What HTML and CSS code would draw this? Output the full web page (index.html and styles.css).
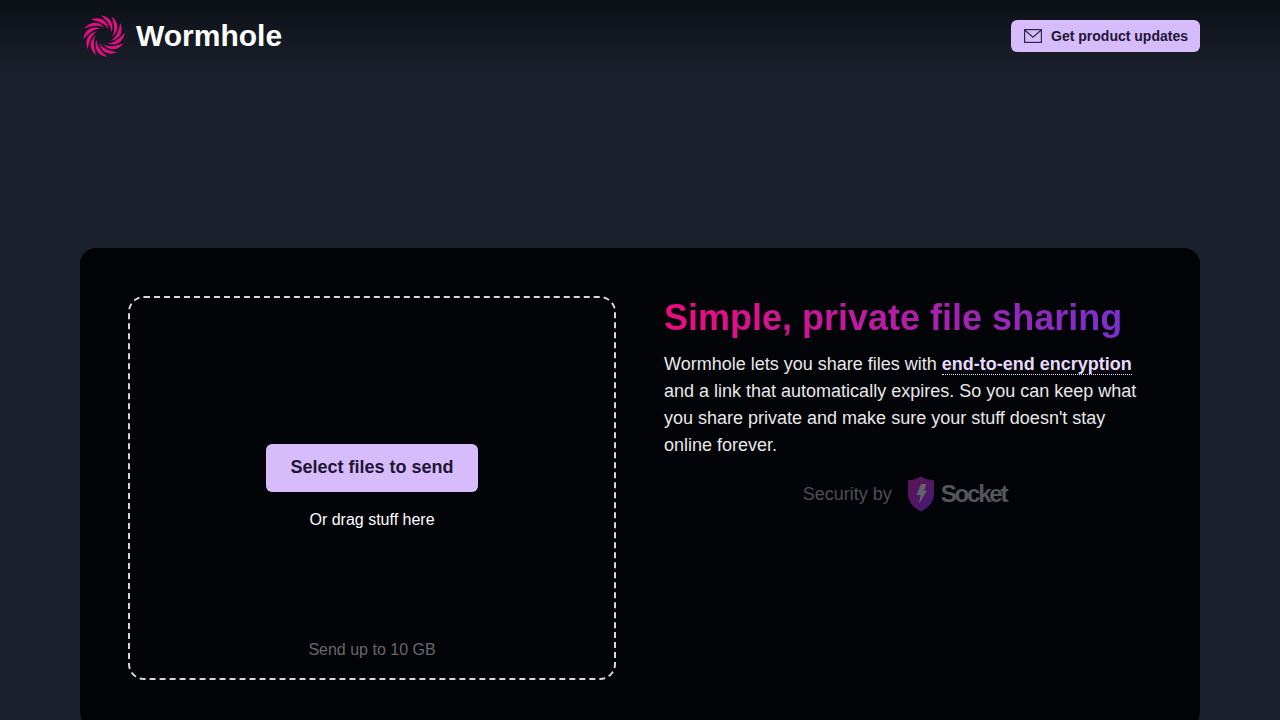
FILE: index.html
```html
<!doctype html>
<html lang="en">
<head>
	<meta charset="utf-8">
	<title>Wormhole</title>
	<link rel="stylesheet" href="styles.css">
</head>
<body>
	<!--Header-->
	<header class="header">
		<div class="brand">
			<svg class="logo" viewBox="0 0 40 40" width="42" height="42">
				<defs>
					<path id="blade" d="M17 .4C25 1 30.500 8 27 17 27.300 10.500 22.500 5 17 .4Z"/>
				</defs>
				<g fill="#e0107f">
					<use href="#blade"/>
					<use href="#blade" transform="rotate(30 20 20)"/>
					<use href="#blade" transform="rotate(60 20 20)"/>
					<use href="#blade" transform="rotate(90 20 20)"/>
					<use href="#blade" transform="rotate(120 20 20)"/>
					<use href="#blade" transform="rotate(150 20 20)"/>
					<use href="#blade" transform="rotate(180 20 20)"/>
					<use href="#blade" transform="rotate(210 20 20)"/>
					<use href="#blade" transform="rotate(240 20 20)"/>
					<use href="#blade" transform="rotate(270 20 20)"/>
					<use href="#blade" transform="rotate(300 20 20)"/>
					<use href="#blade" transform="rotate(330 20 20)"/>
				</g>
			</svg>
			<div class="brandName">Wormhole</div>
		</div>
		<a class="updates" href="#">
			<svg class="mail" viewBox="0 0 18 14" width="18" height="14">
				<rect x=".6" y=".6" width="16.800" height="12.800" fill="none" stroke="#2e2848" stroke-width="1.200"/>
				<path d="M1 1.200l8 7 8-7" fill="none" stroke="#2e2848" stroke-width="1.200"/>
			</svg>
			Get product updates
		</a>
	</header>

	<!--Main card-->
	<main class="card">
		<div class="drop">
			<div></div>
			<div class="dropCenter">
				<button class="select" type="button">Select files to send</button>
				<div class="dragNote">Or drag stuff here</div>
			</div>
			<div class="limit">Send up to 10 GB</div>
		</div>
		<div class="intro">
			<h1 class="headline">Simple, private file sharing</h1>
			<p class="text">Wormhole lets you share files with <a class="strong" href="#">end-to-end encryption</a> and a link that automatically expires. So you can keep what you share private and make sure your stuff doesn't stay online forever.</p>
			<div class="security">
				<span>Security by</span>
				<span class="socket">
					<svg viewBox="0 0 28 36" width="28" height="36">
						<defs>
							<linearGradient id="shield" x1="0" y1="0" x2="1" y2="1">
								<stop offset="0" stop-color="#5e1650"/>
								<stop offset="1" stop-color="#45197a"/>
							</linearGradient>
						</defs>
						<path d="M14 .5C18 3 22 4 27 4.200V18C27 26 21 32 14 35.500 7 32 1 26 1 18V4.200C6 4 10 3 14 .5Z" fill="url(#shield)"/>
						<path d="M14 8H19.500L17 14.500H20L12 28 13.500 19H9.500Z" fill="#62626a"/>
					</svg>
					<span class="socketName">Socket</span>
				</span>
			</div>
		</div>
	</main>
</body>
</html>
```

FILE: styles.css
```css
html, body {
	height: 720px;
	overflow: hidden;
}

body {
	margin: 0;
	background-color: #1a202c;
	font-family: "Liberation Sans", Arial, sans-serif;
	color: #fff;
}

/*header*/
.header {
	height: 72px;
	box-sizing: border-box;
	padding: 0 80px;
	display: flex;
	align-items: center;
	justify-content: space-between;
	background: linear-gradient(#0d1017, #1a202c);
}

.brand {
	display: flex;
	align-items: center;
	gap: 11px;
	padding-left: 3px;
}

.logo {
	display: block;
}

.brandName {
	font-size: 30px;
	font-weight: bold;
	line-height: 36px;
}

.updates {
	display: flex;
	align-items: center;
	gap: 9px;
	height: 32px;
	padding: 0 12px 0 13px;
	border-radius: 6px;
	background-color: #d6bcfa;
	color: #1f1636;
	font-size: 14px;
	font-weight: bold;
	text-decoration: none;
}

/*card*/
.card {
	margin: 176px 80px 0;
	height: 480px;
	box-sizing: border-box;
	padding: 48px;
	display: flex;
	gap: 48px;
	border-radius: 16px;
	background-color: #030407;
}

.drop {
	width: 488px;
	height: 384px;
	flex: none;
	box-sizing: border-box;
	display: grid;
	grid-template-rows: 1fr auto 1fr;
	justify-items: center;
	border: 2px dashed #d8d8d8;
	border-radius: 16px;
}

.dropCenter {
	display: flex;
	flex-direction: column;
	align-items: center;
}

.select {
	height: 48px;
	padding: 0 24px 2px;
	border: 0;
	border-radius: 6px;
	background-color: #d6bcfa;
	color: #1f1636;
	font-family: inherit;
	font-size: 18px;
	font-weight: bold;
}

.dragNote {
	margin-top: 16px;
	font-size: 16px;
	line-height: 24px;
}

.limit {
	align-self: end;
	margin-bottom: 18px;
	font-size: 16px;
	line-height: 20px;
	color: #68686e;
}

/*right column*/
.intro {
	flex: 1;
}

.headline {
	margin: 0;
	font-size: 36px;
	line-height: 44px;
	font-weight: bold;
	background: linear-gradient(90deg, #ed0c7e, #7a30cc);
	background-clip: text;
	-webkit-background-clip: text;
	color: transparent;
	width: fit-content;
}

.text {
	margin: 11px 0 0;
	font-size: 18px;
	line-height: 27px;
	color: #e8e8ea;
}

.strong {
	font-weight: bold;
	color: #e9d8fd;
	text-decoration: none;
	border-bottom: 1px dotted #e9d8fd;
}

.security {
	margin-top: 17px;
	display: flex;
	align-items: center;
	justify-content: center;
	gap: 15px;
	font-size: 18px;
	color: #4e4e54;
}

.socket {
	display: flex;
	align-items: center;
	gap: 6px;
	padding-right: 7px;
}

.socketName {
	font-size: 24px;
	font-weight: bold;
	letter-spacing: -2.200px;
	color: #55555c;
}
```
